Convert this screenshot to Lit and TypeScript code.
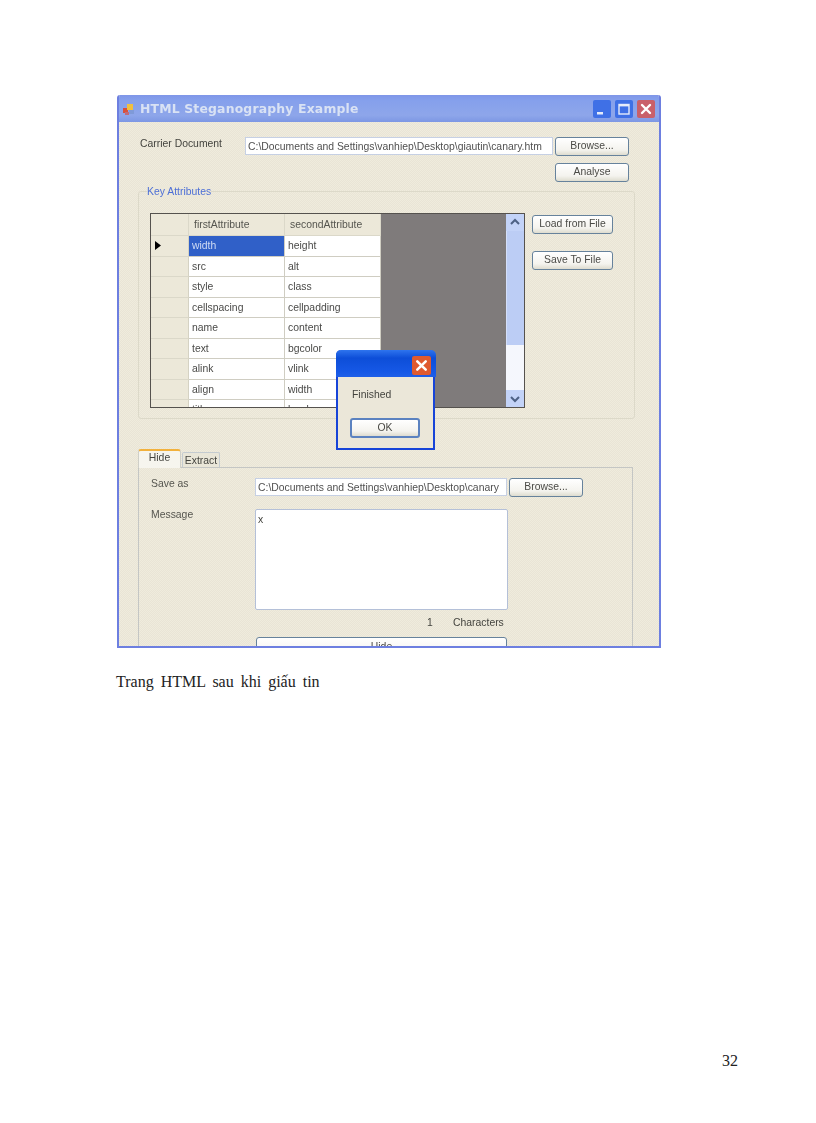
import { LitElement, html, css, svg } from "lit";
import { customElement } from "lit/decorators.js";

const ROWS = [
  ["width", "height"],
  ["src", "alt"],
  ["style", "class"],
  ["cellspacing", "cellpadding"],
  ["name", "content"],
  ["text", "bgcolor"],
  ["alink", "vlink"],
  ["align", "width"],
  ["title", "border"],
];

const closeX = svg`<path d="M5 5 L13 13 M13 5 L5 13" stroke="#fff" stroke-width="2.4" fill="none" stroke-linecap="round"/>`;

@customElement("app-root")
export class AppRoot extends LitElement {
  static styles = css`
    :host { display: block; width: 816px; height: 1123px; background: #fff; position: relative; overflow: hidden; }
    .page { display: flex; flex-direction: column; padding: 95px 0 0 116px; }
    .window {
      width: 540px; height: 551px; margin-left: 1px; border: 2px solid #6d7fe0; border-top: 0; position: relative;
      background-color: #ece8d9;
      background-image: repeating-conic-gradient(#e9e4d6 0 25%, #efecdd 0 50%);
      background-size: 2px 2px;
      font: 10.4px "Liberation Sans", Arial, sans-serif; color: #44443f;
      display: flex; flex-direction: column; overflow: hidden; filter: blur(0.45px);
      border-radius: 3px 3px 0 0;
    }
    .titlebar {
      height: 27px; flex: none; margin: 0 -2px; display: flex; align-items: center; padding: 0 6px 0 5px;
      background: linear-gradient(#7f96e8, #85a0ec 20%, #8ea6ea 75%, #7d97e4);
    }
    .titlebar .text { font: bold 12.4px "DejaVu Sans", sans-serif; color: #d9e2f4; margin-left: 4px; letter-spacing: 0.18px; flex: 1; }
    .winbtns { display: flex; gap: 4px; }
    .winbtn { width: 18px; height: 18px; display: block; }
    .client { padding: 15px 0 0 21px; flex: 1; display: flex; flex-direction: column; min-height: 0; }
    .row { display: flex; align-items: flex-start; }
    .lbl { flex: none; }
    .lbl-carrier { width: 105px; padding-top: 0; margin-top: 0; line-height: 13px; }
    .input { flex: none; background: #fff; height: 18px; line-height: 17px; padding-left: 2px; box-sizing: border-box; white-space: nowrap; overflow: hidden; border: 1px solid #c6d0e4; color: #505050; }
    .w308 { width: 308px; margin-right: 2px; }
    .w252 { width: 252px; margin-right: 2px; }
    .btn {
      flex: none; box-sizing: border-box; width: 74px; height: 19px; border: 1.5px solid #66829c; border-radius: 3px;
      background: linear-gradient(#fff, #f4f3ee 70%, #dedccf); text-align: center; line-height: 15px; color: #4a4a46;
    }
    .analyse { margin: 7px 0 0 415px; }
    .group {
      position: relative; flex: none; box-sizing: border-box; margin: 9px 0 0 -2px; width: 497px; height: 228px;
      border: 1px solid #dcd9c9; border-radius: 3px; padding: 21px 0 0 11px; display: flex; gap: 7px;
    }
    .legend { position: absolute; left: 8px; top: -7px; color: #4d6fd6; line-height: 13px; background: #ece8d9; }
    .grid {
      flex: none; width: 375px; height: 195px; box-sizing: border-box; border: 1.5px solid #55524e; background: #7f7b7b;
      display: flex; overflow: hidden;
    }
    .cells { width: 355px; flex: none; overflow: hidden; }
    .tbl { display: grid; grid-template-columns: 38px 96px 96px; width: 230px; }
    .c { height: 20.5px; box-sizing: border-box; line-height: 19px; padding-left: 3px; background: #fff; border-right: 1px solid #cfcdc2; border-bottom: 1px solid #cfcdc2; color: #4a4a48; white-space: nowrap; overflow: hidden; }
    .h { height: 22px; line-height: 21px; background: #ece8d9; padding-left: 5px; border-right: 1px solid #dbd8c9; border-bottom: 1px solid #dbd8c9; color: #55554f; }
    .rh { background: #ece8d9; border-right: 1px solid #d5d2c3; border-bottom: 1px solid #dbd8c9; display: flex; align-items: center; padding-left: 4px; }
    .sel { background: #3060c8; color: #cfdcf4; }
    .scroll { flex: 1; display: flex; flex-direction: column; background: #f5f7fd; }
    .sb { height: 17px; flex: none; background: #c3d3f8; display: block; width: 100%; }
    .thumb { height: 114px; flex: none; background: #bccdf5; border-left: 1px solid #d4dffa; }
    .track { flex: 1; }
    .side { display: flex; flex-direction: column; gap: 17px; padding-top: 2px; }
    .side .btn { width: 81px; height: 19px; }
    .tabs { display: flex; align-items: flex-end; margin: 30px 0 -1px -2px; position: relative; z-index: 1; flex: none; }
    .tab { box-sizing: border-box; text-align: center; }
    .tab.on { width: 43px; height: 19px; background: #f6f5ee; border-top: 2px solid #f2b13c; border-left: 1px solid #cfcfc8; border-right: 1px solid #cfcfc8; line-height: 13px; border-radius: 3px 3px 0 0; }
    .tab.off { width: 38px; height: 15px; margin-left: 1px; margin-bottom: 1px; background: #e9e6d8; border: 1px solid #c4cbd0; border-bottom: 0; line-height: 16px; border-radius: 2px 2px 0 0; }
    .panel { flex: none; box-sizing: border-box; margin-left: -2px; width: 495px; height: 200px; border: 1px solid #c4c6c4; padding: 10px 0 0 12px; }
    .lbl-t { width: 104px; line-height: 11px; color: #55554f; }
    .area { flex: none; box-sizing: border-box; width: 253px; height: 101px; background: #fff; border: 1px solid #b4c0d8; padding: 3px 2px; line-height: 13px; border-radius: 2px; }
    .count { display: flex; height: 16px; margin: 5px 0 0; line-height: 16px; padding-left: 276px; }
    .count .n { width: 26px; }
    .hidebtn { width: 251px; height: 24px; margin: 6px 0 0 105px; flex: none; line-height: 17px; }
    .dialog {
      position: absolute; left: 217px; top: 255px; width: 99px; height: 100px; box-sizing: border-box; background: #ebe7d9;
      border: 2.5px solid #1744d8; border-top: 0; border-radius: 5px 5px 0 0; z-index: 3; display: flex; flex-direction: column;
    }
    .d-title { height: 27px; flex: none; margin: 0 -2.5px; border-radius: 5px 5px 0 0; display: flex; justify-content: flex-end; padding: 6px 5px 0 0; box-sizing: border-box; background: linear-gradient(#2e74ee, #0d4ed8 30%, #1658e6 80%, #1f5fe8); }
    .d-close { width: 19px; height: 19px; display: block; }
    .d-msg { margin: 11px 0 0 14px; line-height: 13px; }
    .d-ok { width: 70px; height: 20px; margin: 17px 0 0 12px; border: 2px solid #5b82c0; line-height: 15px; }
    .caption { margin-top: 24px; font: 16px/20px "Liberation Serif", "Times New Roman", serif; color: #222; word-spacing: 3px; }
    .pg { position: absolute; left: 722px; top: 1052px; font: 16px/18px "Liberation Serif", serif; color: #222; }
  `;

  render() {
    return html`
      <div class="page">
        <div class="window">
          <div class="titlebar">
            <svg width="14" height="14" viewBox="0 0 14 14">
              <rect x="1" y="6" width="5" height="5" fill="#d8503a"/>
              <rect x="5" y="2" width="6" height="6" fill="#f0c040"/>
              <rect x="7" y="8" width="5" height="4" fill="#7f9ad8"/>
              <rect x="3" y="10" width="4" height="3" fill="#c06a7a"/>
            </svg>
            <span class="text">HTML Steganography Example</span>
            <div class="winbtns">
              <svg class="winbtn" viewBox="0 0 18 18"><rect width="18" height="18" rx="2" fill="#3f70e6"/><rect x="4" y="12" width="6" height="2.5" fill="#e6ecfa"/></svg>
              <svg class="winbtn" viewBox="0 0 18 18"><rect width="18" height="18" rx="2" fill="#3f70e6"/><rect x="4" y="4.5" width="10" height="9.5" fill="none" stroke="#e6ecfa" stroke-width="1.4"/><rect x="4" y="4" width="10" height="2.4" fill="#e6ecfa"/></svg>
              <svg class="winbtn" viewBox="0 0 18 18"><rect width="18" height="18" rx="2" fill="#c9606a"/>${closeX}</svg>
            </div>
          </div>
          <div class="client">
            <div class="row">
              <div class="lbl lbl-carrier">Carrier Document</div>
              <div class="input w308">C:\\Documents and Settings\\vanhiep\\Desktop\\giautin\\canary.htm</div>
              <div class="btn">Browse...</div>
            </div>
            <div class="btn analyse">Analyse</div>
            <div class="group">
              <div class="legend">Key Attributes</div>
              <div class="grid">
                <div class="cells">
                  <div class="tbl">
                    <div class="c h"></div><div class="c h">firstAttribute</div><div class="c h">secondAttribute</div>
                    ${ROWS.map((r, i) => html`
                      <div class="c rh">${i === 0 ? html`<svg width="6" height="9" viewBox="0 0 6 9"><path d="M0 0 L6 4.5 L0 9 Z" fill="#000"/></svg>` : ""}</div>
                      <div class="c ${i === 0 ? "sel" : ""}">${r[0]}</div>
                      <div class="c">${r[1]}</div>
                    `)}
                  </div>
                </div>
                <div class="scroll">
                  <svg class="sb" viewBox="0 0 17 17"><rect width="17" height="17" rx="2" fill="#c3d3f8"/><path d="M4.5 10 L8.5 6 L12.5 10" stroke="#4d6185" stroke-width="2" fill="none"/></svg>
                  <div class="thumb"></div>
                  <div class="track"></div>
                  <svg class="sb" viewBox="0 0 17 17"><rect width="17" height="17" rx="2" fill="#c3d3f8"/><path d="M4.5 7 L8.5 11 L12.5 7" stroke="#4d6185" stroke-width="2" fill="none"/></svg>
                </div>
              </div>
              <div class="side">
                <div class="btn">Load from File</div>
                <div class="btn">Save To File</div>
              </div>
            </div>
            <div class="tabs">
              <div class="tab on">Hide</div>
              <div class="tab off">Extract</div>
            </div>
            <div class="panel">
              <div class="row">
                <div class="lbl lbl-t">Save as</div>
                <div class="input w252">C:\\Documents and Settings\\vanhiep\\Desktop\\canary</div>
                <div class="btn">Browse...</div>
              </div>
              <div class="row" style="margin-top:12px">
                <div class="lbl lbl-t">Message</div>
                <div class="area">x</div>
              </div>
              <div class="count"><span class="n">1</span><span>Characters</span></div>
              <div class="btn hidebtn">Hide</div>
            </div>
          </div>
          <div class="dialog">
            <div class="d-title">
              <svg class="d-close" viewBox="0 0 18 18"><rect width="18" height="18" rx="2" fill="#df5a30"/>${closeX}</svg>
            </div>
            <div class="d-msg">Finished</div>
            <div class="btn d-ok">OK</div>
          </div>
        </div>
        <div class="caption">Trang HTML sau khi giấu tin</div>
      </div>
      <div class="pg">32</div>
    `;
  }
}
